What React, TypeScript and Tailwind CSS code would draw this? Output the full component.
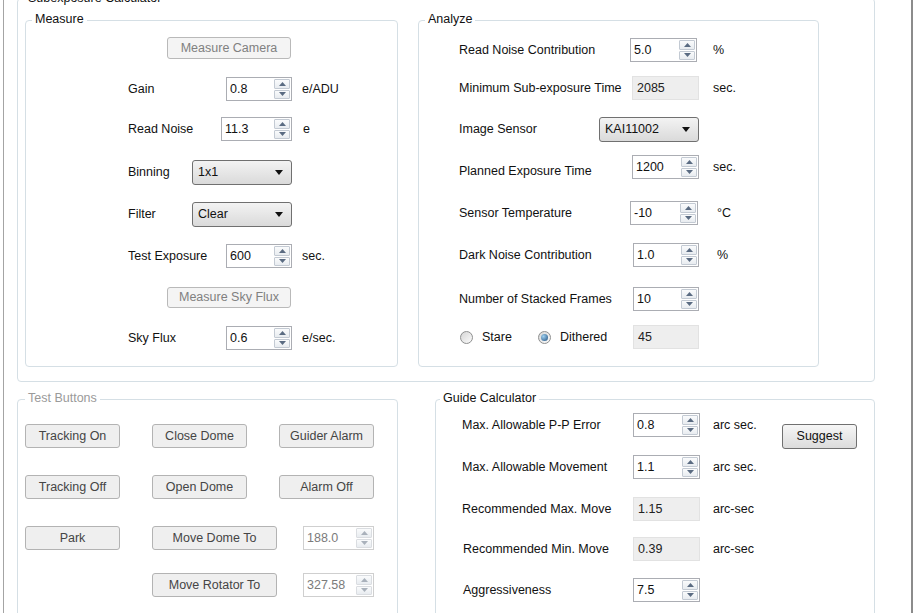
import React from "react";

type SpinProps = { value: string; w: string; disabled?: boolean };

function Arrow({ up, disabled }: { up: boolean; disabled?: boolean }) {
  return (
    <svg width="7" height="4" viewBox="0 0 7 4">
      <path d={up ? "M0 4 L3.5 0 L7 4 Z" : "M0 0 L7 0 L3.5 4 Z"} fill={disabled ? "#a9b1bb" : "#5a6b82"} />
    </svg>
  );
}

function Spin({ value, w, disabled }: SpinProps) {
  return (
    <div
      className={`${w} h-[24px] shrink-0 flex border bg-white ${
        disabled ? "border-[#cfcfcf] text-[#7b7b7b]" : "border-[#abadb3] text-[#111]"
      }`}
    >
      <div className="flex-1 flex items-center pl-[3px]">{value}</div>
      <div className="w-[17px] flex flex-col gap-[1px] py-[1px] pr-[1px]">
        <div
          className={`flex-1 flex items-center justify-center border rounded-[1px] bg-linear-to-b from-[#fafbfc] to-[#e8ecf0] ${
            disabled ? "border-[#dadde1]" : "border-[#c3cad3]"
          }`}
        >
          <Arrow up disabled={disabled} />
        </div>
        <div
          className={`flex-1 flex items-center justify-center border rounded-[1px] bg-linear-to-b from-[#fafbfc] to-[#e8ecf0] ${
            disabled ? "border-[#dadde1]" : "border-[#c3cad3]"
          }`}
        >
          <Arrow up={false} disabled={disabled} />
        </div>
      </div>
    </div>
  );
}

function ReadOnly({ value, w }: { value: string; w: string }) {
  return (
    <div className={`${w} h-[24px] shrink-0 flex items-center pl-[4px] bg-[#eeeeee] border border-[#e2e2e2] text-[#222]`}>
      {value}
    </div>
  );
}

function Combo({ value }: { value: string }) {
  return (
    <div className="w-[100px] h-[25px] shrink-0 flex items-center justify-between pl-[5px] pr-[8px] border border-[#707070] rounded-[3px] bg-linear-to-b from-[#f3f3f3] to-[#dadada] text-[#111]">
      <span>{value}</span>
      <svg width="8" height="5" viewBox="0 0 8 5">
        <path d="M0 0 H8 L4 5 Z" fill="#111" />
      </svg>
    </div>
  );
}

function GrayBtn({ children, w, h }: { children: React.ReactNode; w: string; h: string }) {
  return (
    <div
      className={`${w} ${h} shrink-0 flex items-center justify-center border border-[#b9b9b9] rounded-[3px] bg-[#f4f4f4] text-[#808080]`}
    >
      {children}
    </div>
  );
}

function TestBtn({ children, w }: { children: React.ReactNode; w: string }) {
  return (
    <div
      className={`${w} h-[24px] shrink-0 flex items-center justify-center border border-[#b3b3b3] rounded-[3px] bg-[#efefef] text-[#454545]`}
    >
      {children}
    </div>
  );
}

function Radio({ checked }: { checked?: boolean }) {
  return (
    <span className="w-[13px] h-[13px] shrink-0 rounded-full border border-[#8e8f8f] bg-linear-to-br from-[#d6d6d6] to-[#fbfbfb] flex items-center justify-center">
      {checked ? (
        <span className="w-[7px] h-[7px] rounded-full bg-[radial-gradient(circle_at_35%_35%,#9fd0f0,#1f4f7e)]" />
      ) : null}
    </span>
  );
}

export default function App() {
  return (
    <div className="w-[920px] h-[613px] overflow-hidden bg-white pl-[3px] font-['Liberation_Sans',Arial,sans-serif] text-[12.5px] leading-none text-[#111]">
      <div className="w-[910px] h-[613px] border-l border-l-[#a4a4a4] border-r-2 border-r-[#8c8c8c] pl-[13px] flex flex-col">
        {/* Subexposure Calculator */}
        <div className="relative mt-[-2px] w-[858px] h-[384px] shrink-0 border border-[#d5dfe5] rounded-[4px] pl-[7px] pt-[21px] flex gap-[20px]">
          <span className="absolute left-[8px] top-[-8px] bg-white px-[2px] leading-[15px]">Subexposure Calculator</span>

          {/* Measure */}
          <div className="relative w-[373px] h-[347px] shrink-0 border border-[#d5dfe5] rounded-[4px] flex flex-col">
            <span className="absolute left-[6px] top-[-9px] bg-white px-[3px] leading-[15px]">Measure</span>
            <div className="mt-[16px] pl-[141px] flex">
              <GrayBtn w="w-[124px]" h="h-[22px]">Measure Camera</GrayBtn>
            </div>
            <div className="mt-[18px] h-[24px] pl-[102px] flex items-center">
              <span className="w-[98px]">Gain</span>
              <Spin value="0.8" w="w-[66px]" />
              <span className="ml-[10px]">e/ADU</span>
            </div>
            <div className="mt-[16px] h-[24px] pl-[102px] flex items-center">
              <span className="w-[93px]">Read Noise</span>
              <Spin value="11.3" w="w-[71px]" />
              <span className="ml-[11px]">e</span>
            </div>
            <div className="mt-[19px] h-[25px] pl-[102px] flex items-center">
              <span className="w-[64px]">Binning</span>
              <Combo value="1x1" />
            </div>
            <div className="mt-[17px] h-[25px] pl-[102px] flex items-center">
              <span className="w-[64px]">Filter</span>
              <Combo value="Clear" />
            </div>
            <div className="mt-[17px] h-[24px] pl-[102px] flex items-center">
              <span className="w-[98px]">Test Exposure</span>
              <Spin value="600" w="w-[66px]" />
              <span className="ml-[10px]">sec.</span>
            </div>
            <div className="mt-[19px] pl-[141px] flex">
              <GrayBtn w="w-[124px]" h="h-[21px]">Measure Sky Flux</GrayBtn>
            </div>
            <div className="mt-[18px] h-[24px] pl-[102px] flex items-center">
              <span className="w-[98px]">Sky Flux</span>
              <Spin value="0.6" w="w-[66px]" />
              <span className="ml-[10px]">e/sec.</span>
            </div>
          </div>

          {/* Analyze */}
          <div className="relative w-[401px] h-[347px] shrink-0 border border-[#d5dfe5] rounded-[4px] flex flex-col">
            <span className="absolute left-[6px] top-[-9px] bg-white px-[3px] leading-[15px]">Analyze</span>
            <div className="mt-[17px] h-[24px] pl-[40px] flex items-center">
              <span className="w-[171px]">Read Noise Contribution</span>
              <Spin value="5.0" w="w-[67px]" />
              <span className="ml-[16px]">%</span>
            </div>
            <div className="mt-[14px] h-[24px] pl-[40px] flex items-center">
              <span className="w-[173px]">Minimum Sub-exposure Time</span>
              <ReadOnly value="2085" w="w-[67px]" />
              <span className="ml-[14px]">sec.</span>
            </div>
            <div className="mt-[17px] h-[25px] pl-[40px] flex items-center">
              <span className="w-[140px]">Image Sensor</span>
              <Combo value="KAI11002" />
            </div>
            <div className="mt-[13px] h-[24px] pl-[40px] flex items-center">
              <span className="w-[173px] mt-[8px]">Planned Exposure Time</span>
              <Spin value="1200" w="w-[67px]" />
              <span className="ml-[14px]">sec.</span>
            </div>
            <div className="mt-[22px] h-[24px] pl-[40px] flex items-center">
              <span className="w-[171px]">Sensor Temperature</span>
              <Spin value="-10" w="w-[68px]" />
              <span className="ml-[19px]">°C</span>
            </div>
            <div className="mt-[18px] h-[24px] pl-[40px] flex items-center">
              <span className="w-[174px]">Dark Noise Contribution</span>
              <Spin value="1.0" w="w-[66px]" />
              <span className="ml-[18px]">%</span>
            </div>
            <div className="mt-[20px] h-[24px] pl-[40px] flex items-center">
              <span className="w-[174px]">Number of Stacked Frames</span>
              <Spin value="10" w="w-[66px]" />
            </div>
            <div className="mt-[14px] h-[24px] pl-[41px] flex items-center">
              <span className="w-[78px] flex items-center gap-[9px]">
                <Radio />
                <span>Stare</span>
              </span>
              <span className="w-[95px] flex items-center gap-[9px]">
                <Radio checked />
                <span>Dithered</span>
              </span>
              <ReadOnly value="45" w="w-[66px]" />
            </div>
          </div>
        </div>

        {/* bottom row */}
        <div className="mt-[17px] flex gap-[37px]">
          {/* Test Buttons */}
          <div className="relative w-[381px] h-[240px] shrink-0 border border-[#d5dfe5] rounded-[4px] flex flex-col">
            <span className="absolute left-[7px] top-[-9px] bg-white px-[3px] leading-[15px] text-[#9a9a9a]">Test Buttons</span>
            <div className="mt-[24px] pl-[7px] flex gap-[32px]">
              <TestBtn w="w-[95px]">Tracking On</TestBtn>
              <TestBtn w="w-[95px]">Close Dome</TestBtn>
              <TestBtn w="w-[95px]">Guider Alarm</TestBtn>
            </div>
            <div className="mt-[27px] pl-[7px] flex gap-[32px]">
              <TestBtn w="w-[95px]">Tracking Off</TestBtn>
              <TestBtn w="w-[95px]">Open Dome</TestBtn>
              <TestBtn w="w-[95px]">Alarm Off</TestBtn>
            </div>
            <div className="mt-[27px] pl-[7px] flex items-center">
              <TestBtn w="w-[95px]">Park</TestBtn>
              <span className="ml-[32px]">
                <TestBtn w="w-[125px]">Move Dome To</TestBtn>
              </span>
              <span className="ml-[26px]">
                <Spin value="188.0" w="w-[71px]" disabled />
              </span>
            </div>
            <div className="mt-[23px] pl-[134px] flex items-center">
              <TestBtn w="w-[125px]">Move Rotator To</TestBtn>
              <span className="ml-[26px]">
                <Spin value="327.58" w="w-[71px]" disabled />
              </span>
            </div>
          </div>

          {/* Guide Calculator */}
          <div className="relative w-[440px] h-[240px] shrink-0 border border-[#d5dfe5] rounded-[4px] flex flex-col">
            <span className="absolute left-[4px] top-[-9px] bg-white px-[3px] leading-[15px]">Guide Calculator</span>
            <div className="mt-[13px] h-[24px] pl-[26px] flex items-center">
              <span className="w-[171px]">Max. Allowable P-P Error</span>
              <Spin value="0.8" w="w-[67px]" />
              <span className="ml-[13px] w-[69px]">arc sec.</span>
              <div className="self-start mt-[11px] w-[75px] h-[25px] shrink-0 flex items-center justify-center border border-[#707070] rounded-[3px] bg-linear-to-b from-[#f6f6f6] to-[#dcdcdc] text-[#111]">
                Suggest
              </div>
            </div>
            <div className="mt-[18px] h-[24px] pl-[26px] flex items-center">
              <span className="w-[171px]">Max. Allowable Movement</span>
              <Spin value="1.1" w="w-[67px]" />
              <span className="ml-[13px]">arc sec.</span>
            </div>
            <div className="mt-[18px] h-[24px] pl-[26px] flex items-center">
              <span className="w-[171px]">Recommended Max. Move</span>
              <ReadOnly value="1.15" w="w-[67px]" />
              <span className="ml-[13px]">arc-sec</span>
            </div>
            <div className="mt-[16px] h-[24px] pl-[27px] flex items-center">
              <span className="w-[170px]">Recommended Min. Move</span>
              <ReadOnly value="0.39" w="w-[67px]" />
              <span className="ml-[13px]">arc-sec</span>
            </div>
            <div className="mt-[17px] h-[24px] pl-[27px] flex items-center">
              <span className="w-[170px]">Aggressiveness</span>
              <Spin value="7.5" w="w-[67px]" />
            </div>
          </div>
        </div>
      </div>
    </div>
  );
}
